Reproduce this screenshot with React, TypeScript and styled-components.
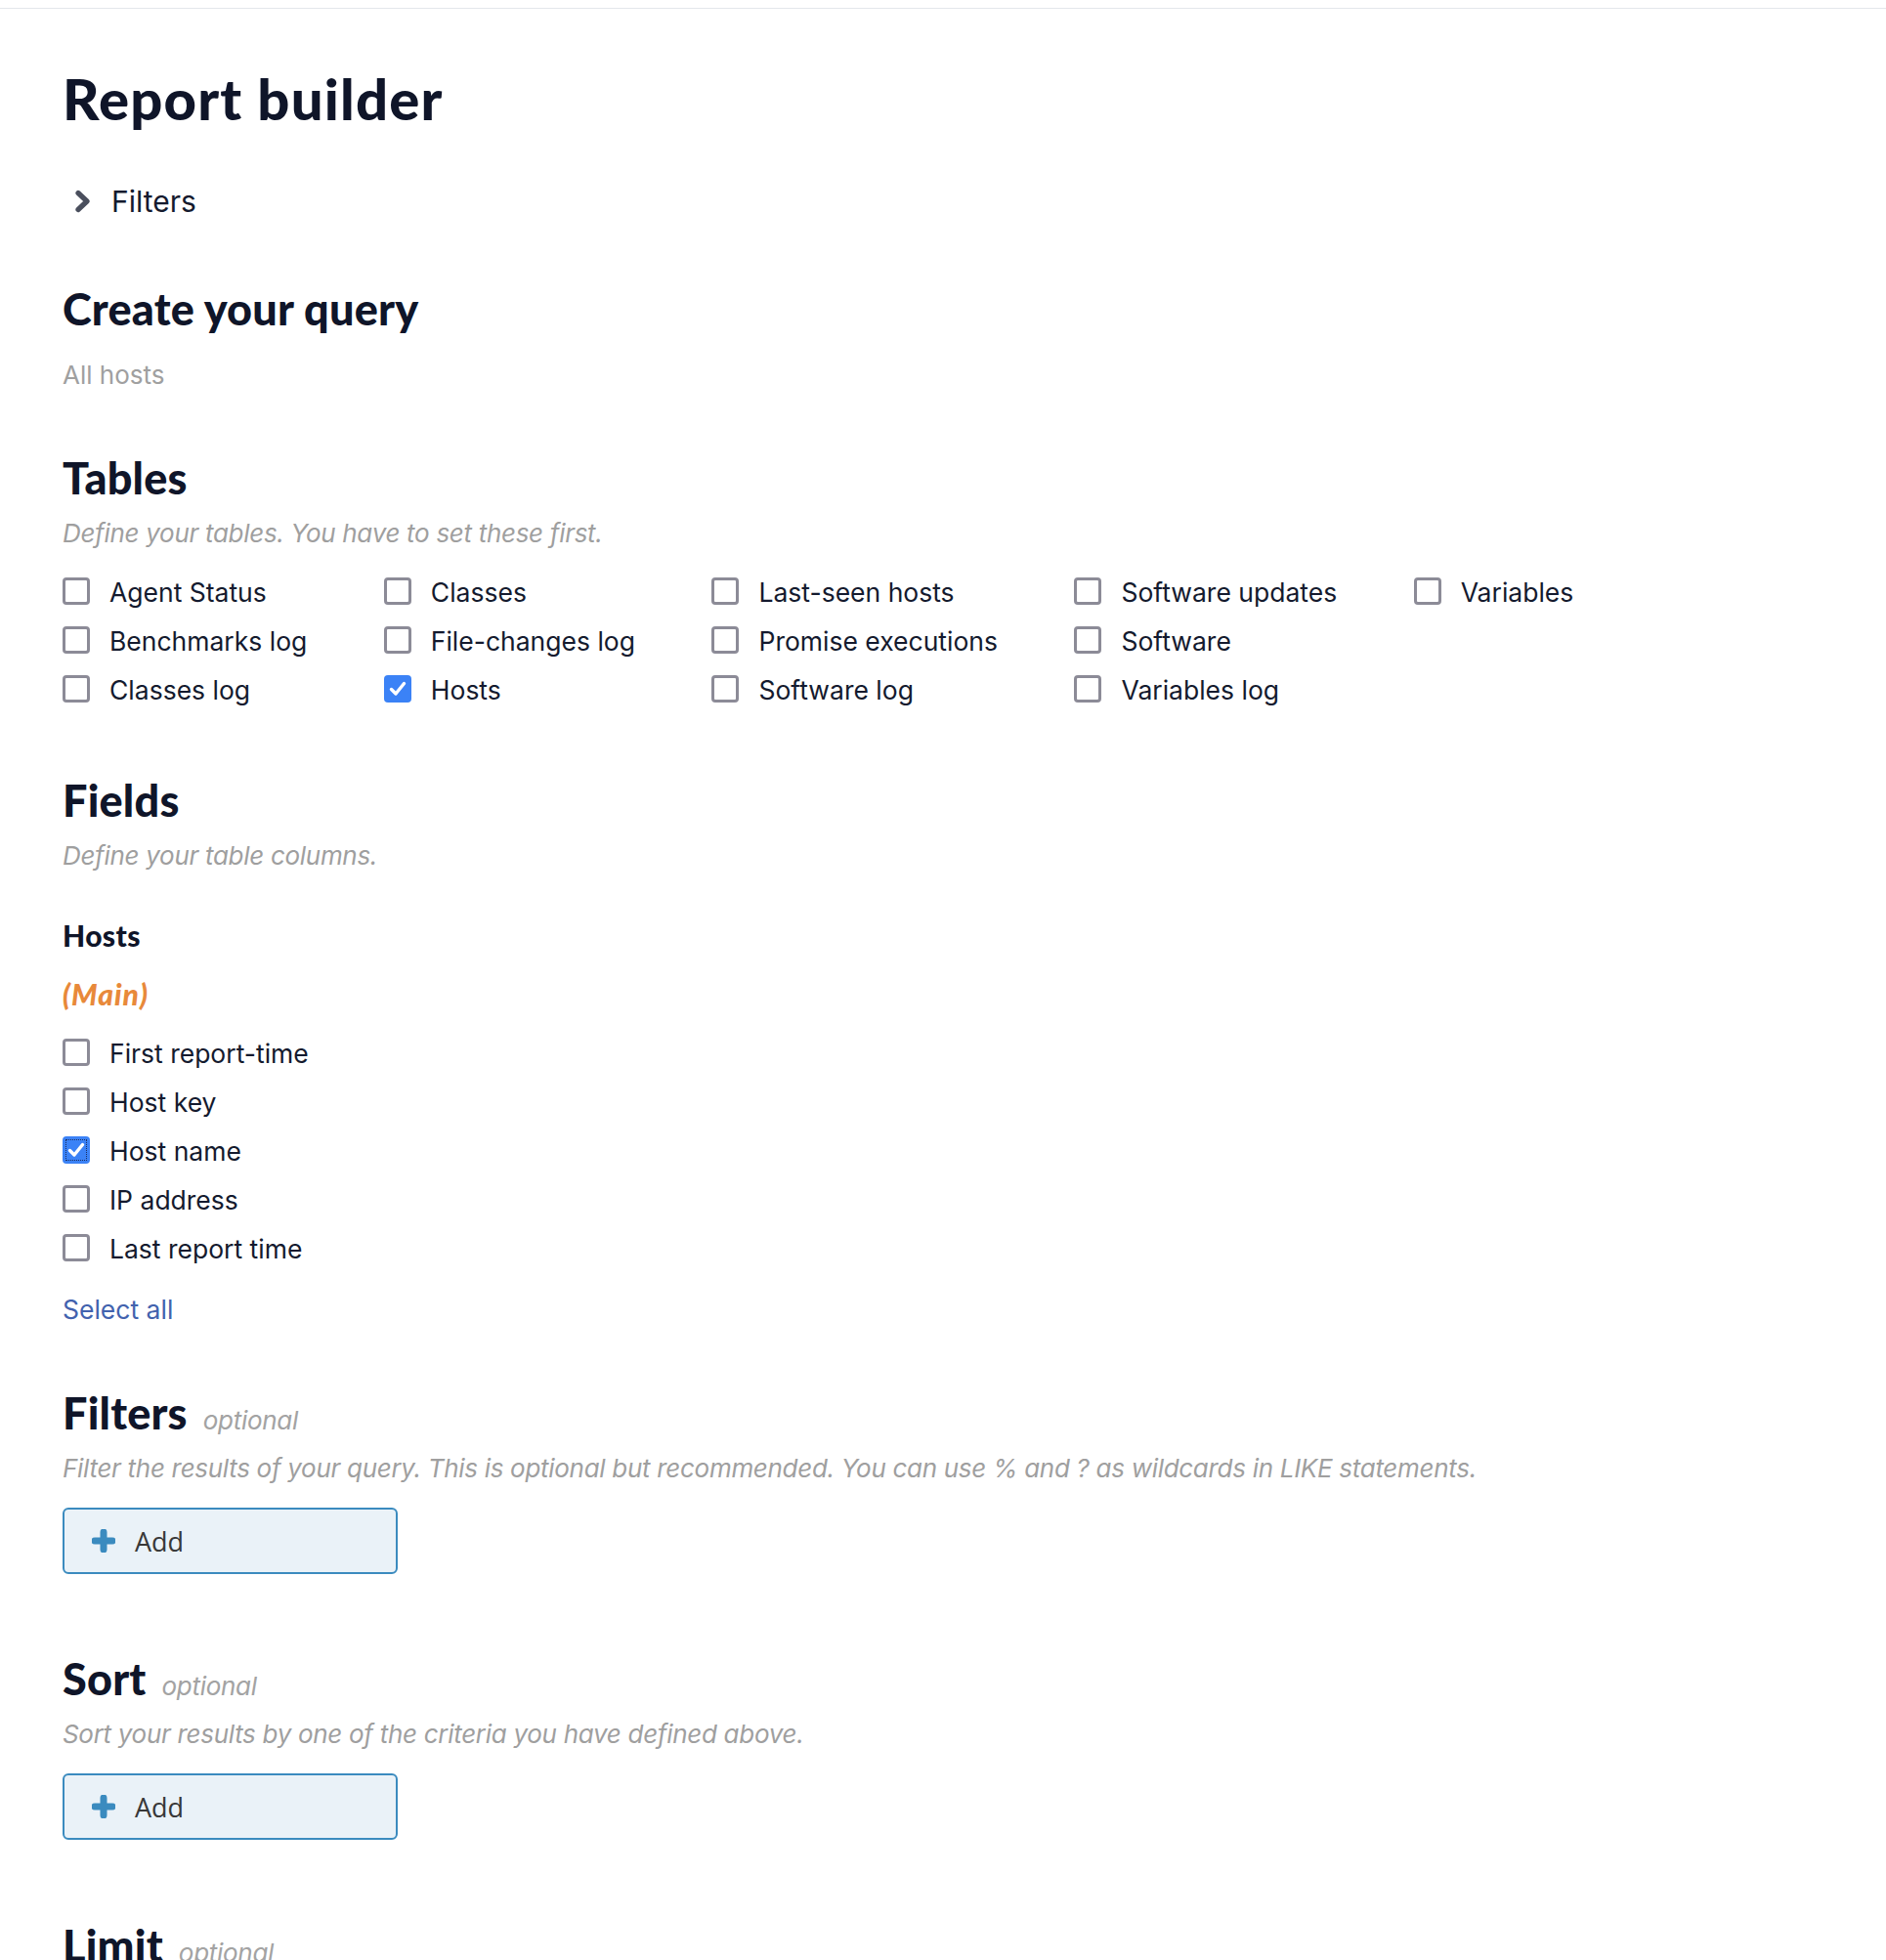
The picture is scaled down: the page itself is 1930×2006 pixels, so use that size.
import React from "react";
import styled, { createGlobalStyle } from "styled-components";

const Global = createGlobalStyle`
  html, body { margin: 0; padding: 0; background: #ffffff; }
  body {
    font-family: Inter, "Noto Sans", Arial, sans-serif;
    color: #141a2e;
    -webkit-font-smoothing: antialiased;
  }
`;

const headingFont = `"Lato Black", Lato, "Noto Sans", sans-serif`;

const Page = styled.div`
  min-height: 2006px;
  overflow: hidden;
`;

const TopBar = styled.div`
  height: 8px;
  border-bottom: 1px solid #e3e6eb;
`;

const Main = styled.main`
  display: flex;
  flex-direction: column;
  align-items: flex-start;
  padding: 0 64px;
`;

const PageTitle = styled.h1`
  margin: 57px 0 0;
  font-family: ${headingFont};
  font-weight: 900;
  font-size: 58px;
  line-height: 70px;
  color: #0f1529;
  letter-spacing: 1.2px;
`;

const Toggle = styled.button`
  margin-top: 50px;
  height: 40px;
  display: flex;
  align-items: center;
  gap: 19px;
  padding: 0 0 0 11px;
  border: 0;
  background: none;
  font-family: Inter, "Noto Sans", sans-serif;
  font-size: 30px;
  color: #141a2e;
  cursor: pointer;
`;

const Section = styled.section<{ $top: number }>`
  margin-top: ${(p) => p.$top}px;
  display: flex;
  flex-direction: column;
  align-items: flex-start;
`;

const Heading = styled.h2`
  margin: 0;
  font-family: ${headingFont};
  font-weight: 900;
  font-size: 45px;
  line-height: 56px;
  color: #0f1529;
  letter-spacing: 0.2px;
`;

const Optional = styled.span`
  margin-left: 16px;
  font-family: Inter, "Noto Sans", sans-serif;
  font-style: italic;
  font-weight: 400;
  font-size: 26px;
  line-height: 1;
  color: #a3a3a3;
  letter-spacing: -0.3px;
`;

const Muted = styled.p`
  margin: 20px 0 0;
  font-size: 26px;
  line-height: 40px;
  color: #a0a0a0;
`;

const Desc = styled.p`
  margin: 9px 0 0;
  font-size: 26px;
  line-height: 40px;
  font-style: italic;
  color: #9f9f9f;
  letter-spacing: -0.3px;
`;

const TableGrid = styled.div`
  margin-top: 15px;
  display: flex;
  gap: 78.5px;
`;

const Column = styled.div`
  display: flex;
  flex-direction: column;
`;

const List = styled.div`
  margin-top: 16px;
  display: flex;
  flex-direction: column;
`;

const Row = styled.label`
  height: 50px;
  display: flex;
  align-items: center;
  gap: 20px;
  font-size: 26.5px;
  color: #141a2e;
  white-space: nowrap;
  cursor: pointer;
`;

const Box = styled.span<{ $checked?: boolean; $focused?: boolean }>`
  box-sizing: border-box;
  width: 28px;
  height: 28px;
  flex: 0 0 28px;
  margin-top: -2px;
  border-radius: 4px;
  display: flex;
  align-items: center;
  justify-content: center;
  background: ${(p) => (p.$checked ? "#3b82f6" : "#ffffff")};
  border: ${(p) => (p.$checked ? "0" : "3px solid #8c8b97")};
  outline: ${(p) => (p.$focused ? "1.5px dotted #1b2f63" : "none")};
  outline-offset: -4px;
`;

const SubHeading = styled.h3`
  margin: 41px 0 0;
  font-family: ${headingFont};
  font-weight: 900;
  font-size: 30px;
  line-height: 40px;
  color: #0f1529;
  letter-spacing: 0.4px;
`;

const MainTag = styled.div`
  margin-top: 20px;
  font-family: ${headingFont};
  font-weight: 900;
  font-style: italic;
  font-size: 30px;
  line-height: 40px;
  color: #e8893a;
  letter-spacing: 1px;
`;

const LinkButton = styled.button`
  margin-top: 17px;
  padding: 0;
  border: 0;
  background: none;
  font-family: Inter, "Noto Sans", sans-serif;
  font-size: 26.5px;
  line-height: 40px;
  color: #4262ae;
  cursor: pointer;
`;

const AddButton = styled.button`
  margin-top: 20px;
  box-sizing: border-box;
  width: 343px;
  height: 68px;
  display: flex;
  align-items: center;
  gap: 20px;
  padding: 0 0 0 28px;
  background: #eaf2f8;
  border: 2px solid #3b8bbf;
  border-radius: 6px;
  font-family: "Open Sans", Inter, sans-serif;
  font-size: 27px;
  color: #383838;
  cursor: pointer;
`;

const Check = () => (
  <svg width="18" height="16" viewBox="0 0 18 16" aria-hidden="true">
    <path
      d="M2.5 8.5 L7 13 L15.5 2.5"
      fill="none"
      stroke="#ffffff"
      strokeWidth="3.4"
      strokeLinecap="round"
      strokeLinejoin="round"
    />
  </svg>
);

const Checkbox = ({ label, checked, focused }: { label: string; checked?: boolean; focused?: boolean }) => (
  <Row>
    <Box $checked={checked} $focused={focused}>{checked && <Check />}</Box>
    {label}
  </Row>
);

const Chevron = () => (
  <svg width="20" height="24" viewBox="0 0 20 24" aria-hidden="true">
    <path
      d="M5 3.5 L14 12 L5 20.5"
      fill="none"
      stroke="#4a4f5d"
      strokeWidth="5.2"
      strokeLinecap="round"
      strokeLinejoin="round"
    />
  </svg>
);

const Plus = () => (
  <svg width="24" height="24" viewBox="0 0 24 24" aria-hidden="true">
    <path d="M12 3 V21 M3 12 H21" stroke="#3b8bbf" strokeWidth="7" strokeLinecap="round" />
  </svg>
);

const tableColumns: { label: string; checked?: boolean }[][] = [
  [{ label: "Agent Status" }, { label: "Benchmarks log" }, { label: "Classes log" }],
  [{ label: "Classes" }, { label: "File-changes log" }, { label: "Hosts", checked: true }],
  [{ label: "Last-seen hosts" }, { label: "Promise executions" }, { label: "Software log" }],
  [{ label: "Software updates" }, { label: "Software" }, { label: "Variables log" }],
  [{ label: "Variables" }],
];

const fields: { label: string; checked?: boolean }[] = [
  { label: "First report-time" },
  { label: "Host key" },
  { label: "Host name", checked: true },
  { label: "IP address" },
  { label: "Last report time" },
];

export default function App() {
  return (
    <Page>
      <Global />
      <TopBar />
      <Main>
        <PageTitle>Report builder</PageTitle>
        <Toggle>
          <Chevron />
          Filters
        </Toggle>

        <Section $top={62}>
          <Heading>Create your query</Heading>
          <Muted>All hosts</Muted>
        </Section>

        <Section $top={57}>
          <Heading>Tables</Heading>
          <Desc>Define your tables. You have to set these first.</Desc>
          <TableGrid>
            {tableColumns.map((col, i) => (
              <Column key={i}>
                {col.map((t) => (
                  <Checkbox key={t.label} label={t.label} checked={t.checked} />
                ))}
              </Column>
            ))}
          </TableGrid>
        </Section>

        <Section $top={60}>
          <Heading>Fields</Heading>
          <Desc>Define your table columns.</Desc>
          <SubHeading>Hosts</SubHeading>
          <MainTag>(Main)</MainTag>
          <List>
            {fields.map((f) => (
              <Checkbox key={f.label} label={f.label} checked={f.checked} focused={f.checked} />
            ))}
          </List>
          <LinkButton>Select all</LinkButton>
        </Section>

        <Section $top={58}>
          <Heading>
            Filters<Optional>optional</Optional>
          </Heading>
          <Desc>
            Filter the results of your query. This is optional but recommended. You can use % and ? as wildcards in LIKE
            statements.
          </Desc>
          <AddButton>
            <Plus />
            Add
          </AddButton>
        </Section>

        <Section $top={79}>
          <Heading>
            Sort<Optional>optional</Optional>
          </Heading>
          <Desc>Sort your results by one of the criteria you have defined above.</Desc>
          <AddButton>
            <Plus />
            Add
          </AddButton>
        </Section>

        <Section $top={80}>
          <Heading>
            Limit<Optional>optional</Optional>
          </Heading>
        </Section>
      </Main>
    </Page>
  );
}
